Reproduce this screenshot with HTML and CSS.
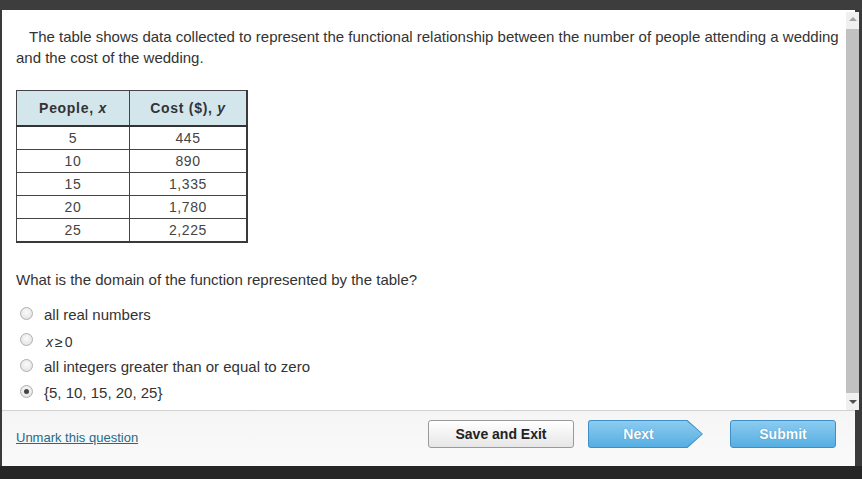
FILE: index.html
```html
<!DOCTYPE html>
<html>
<head>
<meta charset="utf-8">
<link rel="stylesheet" href="styles.css">
</head>
<body>
<div class="topbar"></div>
<div class="frame">
  <div class="viewport">
    <div class="content">
      <p class="intro">The table shows data collected to represent the functional relationship between the number of people attending a wedding and the cost of the wedding.</p>
      <table class="data">
        <thead>
          <tr><th class="c1">People, <i>x</i></th><th class="c2">Cost ($), <i>y</i></th></tr>
        </thead>
        <tbody>
          <tr><td>5</td><td>445</td></tr>
          <tr><td>10</td><td>890</td></tr>
          <tr><td>15</td><td>1,335</td></tr>
          <tr><td>20</td><td>1,780</td></tr>
          <tr><td>25</td><td>2,225</td></tr>
        </tbody>
      </table>
      <p class="question">What is the domain of the function represented by the table?</p>
      <ul class="options">
        <li><span class="radio"></span><span>all real numbers</span></li>
        <li><span class="radio"></span><span class="math"><i>x</i>≥0</span></li>
        <li><span class="radio"></span><span>all integers greater than or equal to zero</span></li>
        <li><span class="radio checked"></span><span>{5, 10, 15, 20, 25}</span></li>
      </ul>
    </div>
    <div class="scrollbar">
      <div class="arrow up"></div>
      <div class="thumb"></div>
      <div class="arrow down"></div>
    </div>
  </div>
  <div class="footer">
    <a class="unmark" href="#">Unmark this question</a>
    <div class="buttons">
      <button class="btn save">Save and Exit</button>
      <div class="next"><div class="next-inner">Next</div></div>
      <button class="btn submit">Submit</button>
    </div>
  </div>
</div>
<div class="bottombar"></div>
</body>
</html>
```
FILE: styles.css
```css
html, body {
  margin: 0;
  padding: 0;
}
body {
  width: 862px;
  height: 479px;
  background: #3a3a3a;
  font-family: "Liberation Sans", Arial, sans-serif;
  color: #333;
  overflow: hidden;
}
.topbar {
  height: 10px;
  background: #3d3d3d;
}
.frame {
  margin-left: 2px;
  width: 853px;
  background: #fff;
  display: flex;
  flex-direction: column;
}
.viewport {
  height: 400px;
  display: flex;
  border-bottom: 1px solid #d2d2d2;
}
.content {
  flex: 1;
  padding: 16px 0 0 14px;
}
.intro {
  margin: 0;
  font-size: 15px;
  line-height: 21px;
  text-indent: 13px;
  width: 830px;
}
.data {
  margin-top: 22px;
  border-collapse: collapse;
  font-size: 14px;
  border: 2px solid #3a3a3a;
  border-top: 1px solid #555;
  border-left: 1px solid #555;
}
.data th {
  background: #d3e6ec;
  font-weight: bold;
  letter-spacing: 0.7px;
  color: #333;
  height: 34px;
  padding: 0;
  border: 1px solid #444;
  border-bottom: 2px solid #333;
}
.data th.c1 { width: 112px; }
.data th.c2 { width: 116px; }
.data th i { font-weight: bold; }
.data td {
  text-align: center;
  height: 22px;
  padding: 0;
  border: 1px solid #444;
  letter-spacing: 0.6px;
  color: #444;
  font-size: 14px;
}
.question {
  margin: 28px 0 0 0;
  font-size: 15px;
  line-height: 18px;
}
.options {
  list-style: none;
  margin: 12px 0 0 0;
  padding: 0;
}
.options li {
  display: flex;
  align-items: center;
  height: 26px;
  font-size: 15px;
}
.radio {
  width: 11px;
  height: 11px;
  border-radius: 50%;
  border: 1px solid #b0b0b0;
  background: radial-gradient(circle at 50% 40%, #fbfbfb 0, #e6e6e6 70%, #d8d8d8 100%);
  margin: 0 11px 2px 4px;
  box-sizing: content-box;
  position: relative;
}
.radio.checked::after {
  content: "";
  position: absolute;
  left: 3px;
  top: 3px;
  width: 5px;
  height: 5px;
  border-radius: 50%;
  background: #444;
}
.math {
  font-size: 14px;
  letter-spacing: 2px;
  padding-top: 4px;
  padding-left: 2px;
}
.scrollbar {
  width: 15px;
  margin-top: 2px;
  background: #f0f0f0;
  display: flex;
  flex-direction: column;
  align-items: center;
}
.arrow {
  width: 0;
  height: 0;
  border-left: 4px solid transparent;
  border-right: 4px solid transparent;
}
.arrow.up {
  border-bottom: 4px solid #a3a3a3;
  margin: 5px 0 8px;
}
.thumb {
  width: 13px;
  flex: 1;
  background: #c1c1c1;
}
.arrow.down {
  border-top: 4px solid #505050;
  margin: 7px 0 6px;
}
.footer {
  height: 55px;
  display: flex;
  align-items: flex-start;
  justify-content: space-between;
  padding: 9px 19px 0 14px;
  box-sizing: border-box;
  background: linear-gradient(#f5f5f5, #fafafa);
}
.unmark {
  font-size: 13px;
  color: #1d6c8a;
  margin-top: 10px;
}
.buttons {
  display: flex;
  align-items: flex-start;
}
.btn {
  height: 28px;
  border-radius: 3px;
  font-family: "Liberation Sans", Arial, sans-serif;
  font-weight: bold;
  font-size: 14px;
  padding: 0;
}
.save {
  width: 146px;
  border: 1px solid #9a9a9a;
  background: linear-gradient(#ffffff, #e6e6e6);
  color: #222;
  margin-right: 14px;
}
.next {
  width: 115px;
  height: 28px;
  background: #3f8fc6;
  border-radius: 3px 0 0 3px;
  clip-path: polygon(0 0, 86.5% 0, 100% 50%, 86.5% 100%, 0 100%);
  margin-right: 27px;
  padding: 1px;
  box-sizing: border-box;
}
.next-inner {
  height: 100%;
  padding-right: 14px;
  box-sizing: border-box;
  border-radius: 2px 0 0 2px;
  background: linear-gradient(#8ccbf0, #56aee2);
  clip-path: polygon(0 0, 86.5% 0, 100% 50%, 86.5% 100%, 0 100%);
  color: #fff;
  font-weight: bold;
  font-size: 14px;
  display: flex;
  align-items: center;
  justify-content: center;
  text-shadow: 0 0 1px #3a7fb0;
}
.submit {
  width: 106px;
  border: 1px solid #3f8fc6;
  background: linear-gradient(#8ccbf0, #56aee2);
  color: #fff;
  text-shadow: 0 0 1px #3a7fb0;
}
.bottombar {
  height: 13px;
  background: #262626;
}
```
